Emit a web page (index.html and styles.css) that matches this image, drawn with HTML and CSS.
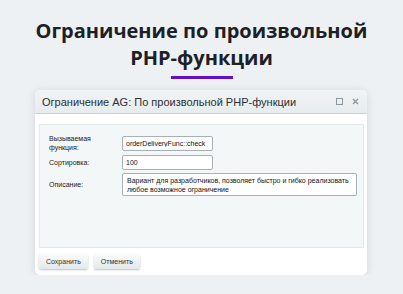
FILE: index.html
```html
<!DOCTYPE html>
<html lang="ru">

<head>
    <meta charset="UTF-8">
    <meta name="viewport" content="width=device-width, initial-scale=1.0">
    <title>Ограничение по произвольной PHP-функции</title>
    <link rel="stylesheet" href="styles.css">
</head>

<body>
    <div class="hero">
        <h1 class="hero-title">Ограничение по произвольной<br>PHP-функции</h1>
        <div class="hero-line"></div>
    </div>

    <div class="dialog">
        <div class="dialog-head">
            <span class="dialog-title">Ограничение AG: По произвольной PHP-функции</span>
            <span class="dialog-icons">
                <svg width="7" height="7" viewBox="0 0 7 7"><rect x="0.5" y="0.5" width="6" height="6" fill="none" stroke="#8c979e" stroke-width="1"/></svg>
                <svg width="7" height="7" viewBox="0 0 7 7"><path d="M1 1L6 6M6 1L1 6" stroke="#8c979e" stroke-width="1.3"/></svg>
            </span>
        </div>

        <div class="dialog-body">
            <div class="form-panel">
                <label class="label" for="func">Вызываемая<br>функция:</label>
                <input class="input" id="func" type="text" value="orderDeliveryFunc::check">

                <label class="label" for="sort">Сортировка:</label>
                <input class="input" id="sort" type="text" value="100">

                <label class="label" for="desc">Описание:</label>
                <div class="textarea" id="desc">Вариант для разработчиков, позволяет быстро и гибко реализовать любое возможное ограничение</div>
            </div>

            <div class="buttons">
                <button class="button">Сохранить</button>
                <button class="button">Отменить</button>
            </div>
        </div>
    </div>
</body>

</html>
```

FILE: styles.css
```css
body {
    margin: 0;
    background: #eef1f4;
    font-family: Arial, "Liberation Sans", sans-serif;
}

.hero {
    padding-top: 17px;
    display: flex;
    flex-direction: column;
    align-items: center;
}

.hero-title {
    margin: 0;
    font-family: "Open Sans", "Noto Sans", sans-serif;
    font-size: 20px;
    font-weight: 700;
    line-height: 27px;
    text-align: center;
    color: #1d2024;
}

.hero-line {
    width: 62px;
    height: 3px;
    margin-top: 5px;
    background: #6410c8;
}

.dialog {
    width: 332px;
    margin: 11px 0 0 35px;
    background: #fff;
    border-radius: 5px;
    box-shadow: 0 1px 8px rgba(120, 135, 150, 0.25);
    overflow: hidden;
}

.dialog-head {
    height: 23px;
    display: flex;
    align-items: center;
    justify-content: space-between;
    padding: 0 8px 0 7px;
    background: linear-gradient(#f1f4f6, #e6ecee);
    border-bottom: 1px solid #c9d1d5;
}

.dialog-title {
    font-size: 11px;
    color: #2b2f33;
}

.dialog-icons {
    display: flex;
    gap: 9px;
}

.dialog-body {
    padding: 10px 3px 6px 4px;
}

.form-panel {
    display: grid;
    grid-template-columns: 73px 1fr;
    row-gap: 3px;
    align-items: center;
    height: 124px;
    box-sizing: border-box;
    padding: 9px 8px 0 9px;
    align-content: start;
    background: #f3f7f8;
    border: 1px solid #e1e9eb;
}

.label {
    font-size: 7px;
    line-height: 9px;
    color: #1a1a1a;
}

.input {
    width: 91px;
    height: 15px;
    box-sizing: border-box;
    padding: 0 3px;
    border: 1px solid #a9b0b5;
    border-radius: 2px;
    font-family: Arial, "Liberation Sans", sans-serif;
    font-size: 7px;
    color: #111;
    background: #fff;
}

.textarea {
    width: 235px;
    height: 23px;
    box-sizing: border-box;
    padding: 2px 4px;
    border: 1px solid #a9b0b5;
    border-radius: 2px;
    font-size: 7px;
    line-height: 9px;
    color: #111;
    background: #fff;
}

.buttons {
    display: flex;
    gap: 6px;
    margin-top: 6px;
}

.button {
    height: 15px;
    padding: 0 7px;
    border: 0;
    border-radius: 2px;
    background: linear-gradient(#fbfcfc, #e2e8ea);
    box-shadow: 0 1px 2px rgba(0, 0, 0, 0.25);
    font-family: Arial, "Liberation Sans", sans-serif;
    font-size: 7px;
    color: #2e3338;
}
```
